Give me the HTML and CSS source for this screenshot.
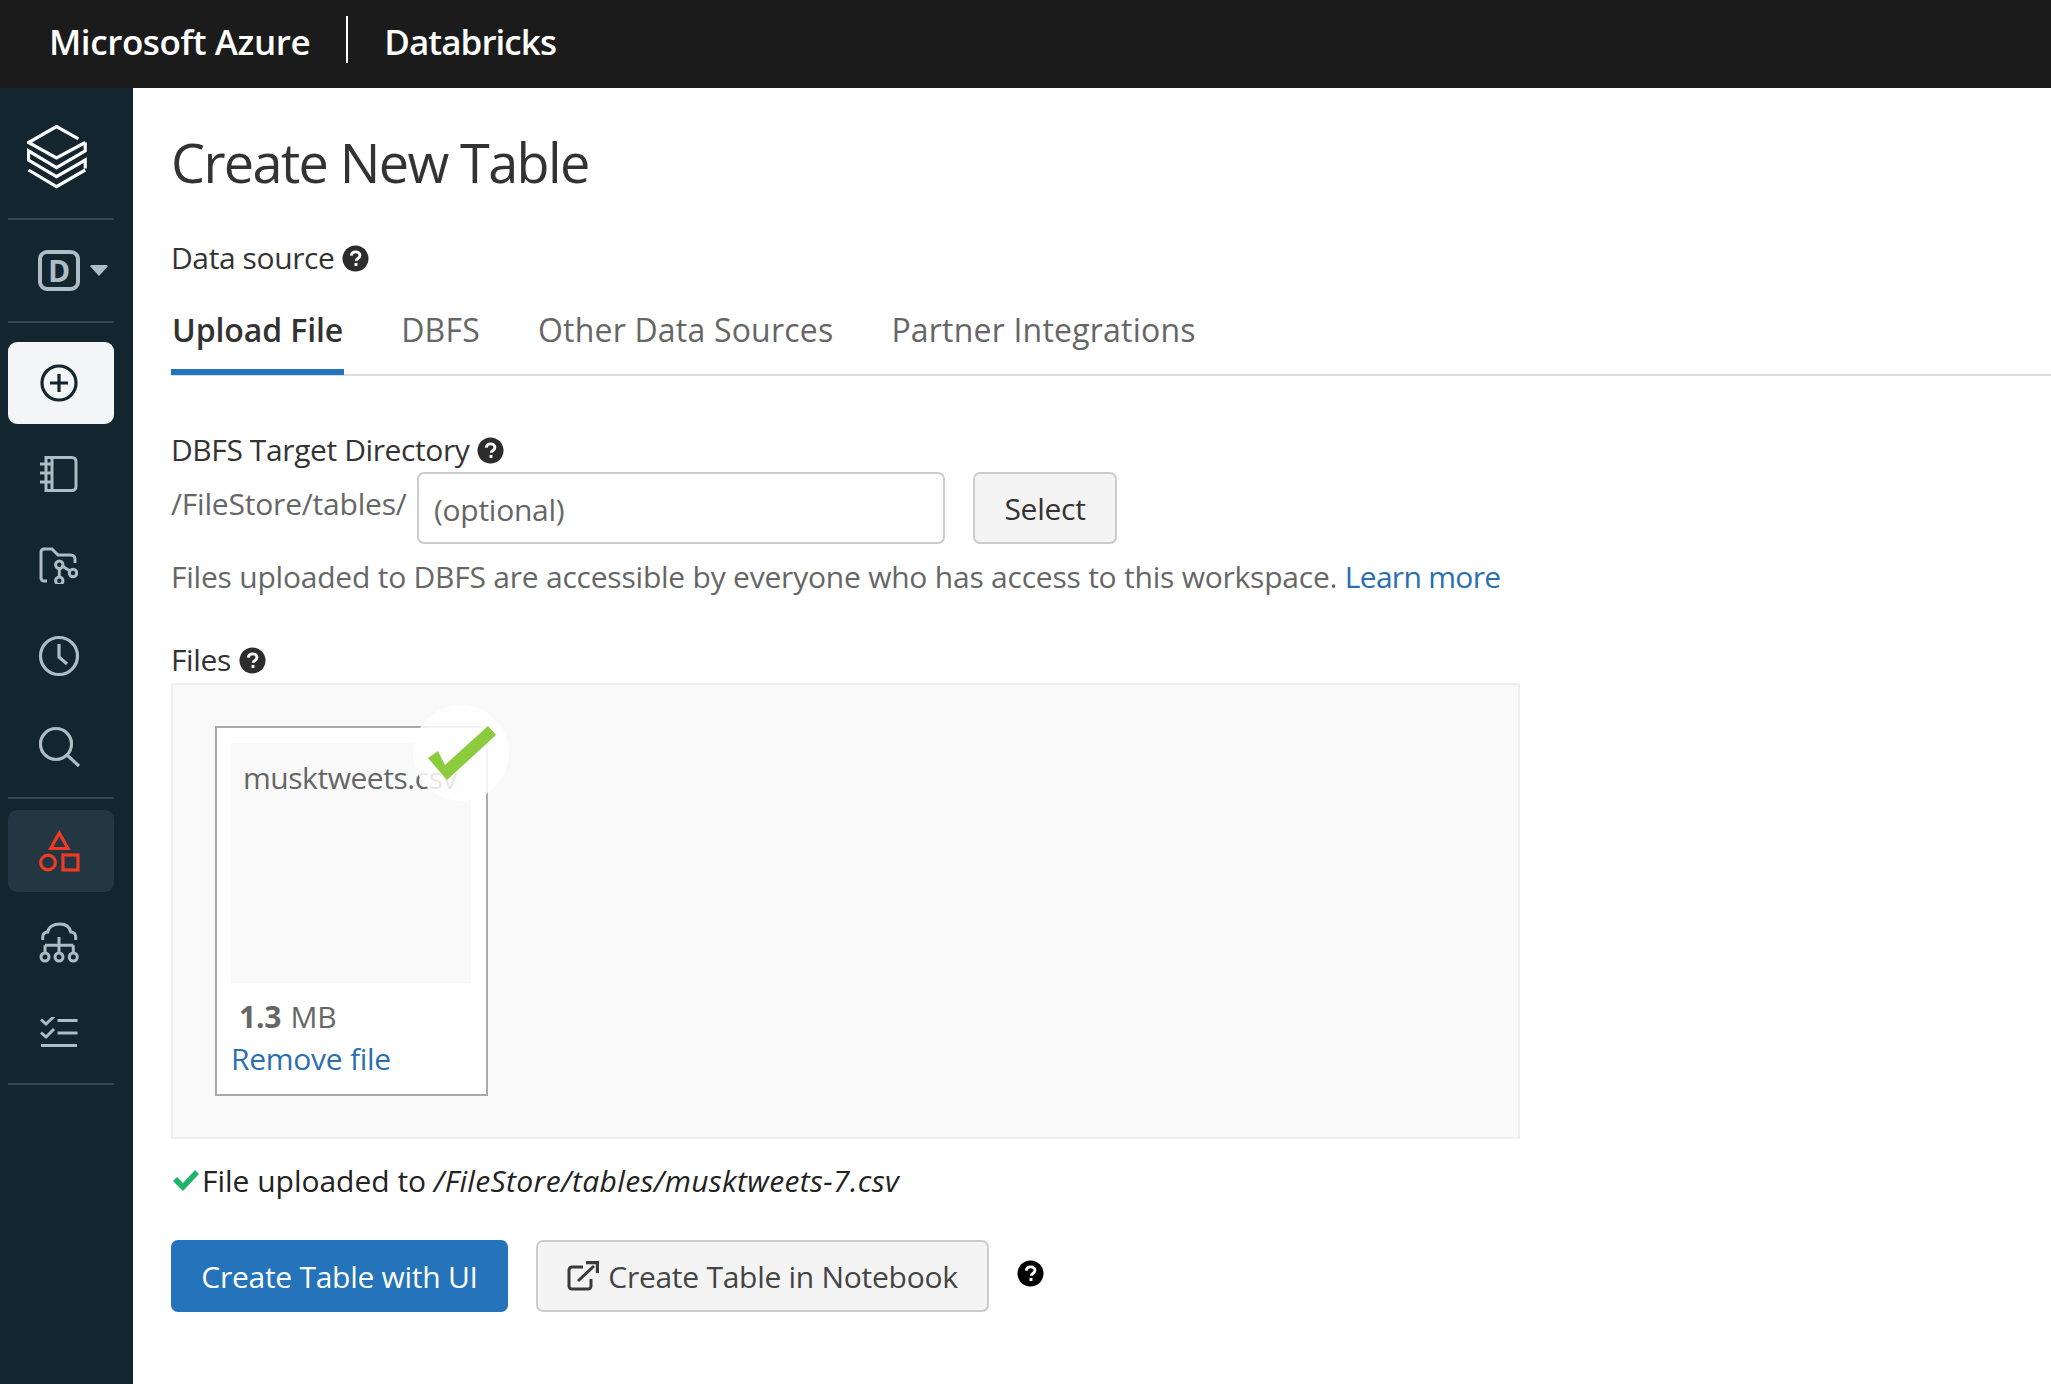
FILE: index.html
```html
<!DOCTYPE html>
<html lang="en">
<head>
<meta charset="utf-8">
<title>Create New Table</title>
<link rel="stylesheet" href="styles.css">
</head>
<body>
<svg class="defs" width="0" height="0" aria-hidden="true">
  <symbol id="q" viewBox="0 0 28 28">
    <circle cx="14" cy="14" r="13.5" fill="currentColor"/>
    <path d="M9.600 11c.3-2.600 2.200-3.900 4.600-3.900 2.600 0 4.400 1.500 4.400 3.600 0 1.700-1 2.500-2.200 3.300-1 .7-1.500 1.200-1.500 2.400" fill="none" stroke="#fff" stroke-width="3"/>
    <rect x="13" y="18.600" width="3" height="3.200" fill="#fff"/>
  </symbol>
</svg>
<header class="topbar">
  <span class="brand">Microsoft Azure</span>
  <span class="brand-div"></span>
  <span class="brand brand-b">Databricks</span>
</header>
<div class="shell">
  <nav class="sidebar">
    <div class="logo">
      <svg width="60" height="64" viewBox="0 0 60 64" fill="none" stroke="#fff" stroke-width="3.200"><path d="M51.500 13.800 29.500 1.500 1.500 17.500 29.500 33 58.200 17.500"/><path d="M58.200 17.500v8.300L29.500 42.700 1.500 25.800V35l28 16.700L58.200 35v8.500"/><path d="M1.500 45l28 16.700L58.200 45"/></svg>
    </div>
    <div class="switcher">
      <span class="workspace">D</span>
      <svg width="20" height="13" viewBox="0 0 18 12"><path d="M2 1h14a1 1 0 0 1 .8 1.600L9 11 1.200 2.600A1 1 0 0 1 2 1z" fill="#aebcc4"/></svg>
    </div>
    <div class="group">
      <div class="item item-new">
        <svg width="38" height="38" viewBox="0 0 38 38" fill="none" stroke="#13252e" stroke-width="3.200"><circle cx="19" cy="19" r="17"/><path d="M19 10v18M10 19h18"/></svg>
      </div>
      <div class="item">
        <svg width="38" height="36" viewBox="0 0 38 36" fill="none" stroke="#aebcc4" stroke-width="3"><path d="M6 1.500h26a4 4 0 0 1 4 4v25a4 4 0 0 1-4 4H6z"/><path d="M12 1.500v33M0 8h11M0 17h11M0 26h11"/></svg>
      </div>
      <div class="item">
        <svg width="39" height="38" viewBox="0 -1 39 38" fill="none" stroke="#aebcc4" stroke-width="3"><path d="M8 34H5a3 3 0 0 1-3-3V5a3 3 0 0 1 3-3h8l6 6h13a4 4 0 0 1 4 4v4"/><circle cx="20.300" cy="17.700" r="3.700"/><circle cx="34" cy="26" r="3.700"/><circle cx="20.300" cy="33.700" r="3.700"/><path d="M20.300 21.500v8.500M24 19.500l7 4.500"/></svg>
      </div>
      <div class="item">
        <svg width="42" height="42" viewBox="0 0 42 42" fill="none" stroke="#aebcc4" stroke-width="3.200"><circle cx="21" cy="21" r="18.500"/><path d="M21 9v13l8 7"/></svg>
      </div>
      <div class="item">
        <svg width="42" height="42" viewBox="0 0 42 42" fill="none" stroke="#aebcc4" stroke-width="3.200"><circle cx="18" cy="18" r="15.500"/><path d="m29 29 12 11"/></svg>
      </div>
    </div>
    <div class="group group-b">
      <div class="item item-active">
        <svg width="42" height="44" viewBox="0 0 42 44" fill="none" stroke="#f03a24" stroke-width="3.200"><path d="m21.300 4 8.600 15.500H12.700z"/><circle cx="10" cy="33.500" r="7.400"/><rect x="25" y="26" width="15" height="15"/></svg>
      </div>
      <div class="item">
        <svg width="42" height="42" viewBox="0 0 42 42" fill="none" stroke="#aebcc4" stroke-width="3"><path d="M4.700 19v-3c0-3 2-5 5-5 1-5 6-8 12-8s10 3 11 8c3 0 5 2 5 5v3"/><path d="M21 16v16M7 24.300h28.300M7 24.300V32M35.300 24.300V32"/><circle cx="7" cy="36" r="4"/><circle cx="21" cy="36" r="4"/><circle cx="35.300" cy="36" r="4"/></svg>
      </div>
      <div class="item">
        <svg width="38" height="33" viewBox="0 2 38 33" fill="none" stroke="#aebcc4" stroke-width="3"><path d="m1 4.500 5 4.500 8-7.500M1 17.500 6 22l8-8"/><path d="M17.500 5.500h20M17.500 18h20M1 30.500h36"/></svg>
      </div>
    </div>
  </nav>
  <main class="content">
    <h1 class="title">Create New Table</h1>
    <div class="label">Data source <svg class="q"><use href="#q"/></svg></div>
    <div class="tabs">
      <span class="tab tab-on">Upload File</span>
      <span class="tab">DBFS</span>
      <span class="tab">Other Data Sources</span>
      <span class="tab">Partner Integrations</span>
    </div>
    <div class="label label-dir">DBFS Target Directory <svg class="q"><use href="#q"/></svg></div>
    <div class="dir-row">
      <span class="path">/FileStore/tables/</span>
      <span class="input">(optional)</span>
      <span class="btn btn-select">Select</span>
    </div>
    <p class="help">Files uploaded to DBFS are accessible by everyone who has access to this workspace. <a class="link">Learn more</a></p>
    <div class="label label-files">Files <svg class="q"><use href="#q"/></svg></div>
    <div class="drop">
      <div class="card">
        <div class="thumb"><span class="fname">musktweets.csv</span></div>
        <div class="size"><b>1.3</b> MB</div>
        <a class="link remove">Remove file</a>
        <div class="ok">
          <svg width="96" height="96" viewBox="0 0 96 96"><path d="M15 53 25 46 32 60 75 21 83 30 34 75z" fill="#8ccb3e"/></svg>
        </div>
      </div>
    </div>
    <div class="status">
      <svg width="28" height="24" viewBox="0 0 28 24"><path d="M1 13l4-4 6 6L23 2l4 4-16 17z" fill="#1fb36b"/></svg>
      <span>File uploaded to <i>/FileStore/tables/musktweets-7.csv</i></span>
    </div>
    <div class="actions">
      <span class="btn btn-primary">Create Table with UI</span>
      <span class="btn btn-note">
        <svg width="32" height="30" viewBox="0 0 32 30" fill="none" stroke="#3a3a3a" stroke-width="3"><path d="M24 18v7a3 3 0 0 1-3 3H5a3 3 0 0 1-3-3V9a3 3 0 0 1 3-3h11"/><path d="M11 20 27 5"/><path d="M19 1.500h11.500V12" stroke-width="3.400"/></svg>
        Create Table in Notebook
      </span>
      <svg class="q q-black"><use href="#q"/></svg>
    </div>
  </main>
</div>
</body>
</html>
```
FILE: styles.css
```css
* { box-sizing: border-box; }
html, body { margin: 0; padding: 0; }
body {
  width: 2051px;
  height: 1384px;
  overflow: hidden;
  background: #fff;
  font-family: "Open Sans", "Noto Sans", sans-serif;
  font-size: 30px;
  letter-spacing: -0.27px;
  color: #333;
  display: flex;
  flex-direction: column;
}
.defs { position: absolute; }
.topbar {
  height: 88px;
  flex: none;
  background: #1b1b1b;
  display: flex;
  align-items: center;
  padding: 0 0 5px 49px;
  color: #fff;
}
.brand { font-size: 35px; font-weight: 600; letter-spacing: -0.4px; }
.brand-b { letter-spacing: -0.95px; }
.brand-div { width: 2px; height: 47px; background: #fff; margin: 0 36px 5px 36px; }
.shell { flex: 1; display: flex; min-height: 0; }
.sidebar {
  width: 133px;
  flex: none;
  background: #13252e;
  display: flex;
  flex-direction: column;
  padding: 0 19px 0 8px;
}
.logo {
  height: 132px;
  display: flex;
  align-items: center;
  justify-content: center;
  padding: 7px 9px 0 0;
  border-bottom: 2px solid #354650;
}
.switcher {
  height: 103px;
  display: flex;
  align-items: center;
  justify-content: flex-end;
  gap: 9px;
  padding-right: 5px;
  border-bottom: 2px solid #354650;
}
.workspace {
  width: 42px;
  height: 41px;
  border: 4px solid #aebcc4;
  border-radius: 9px;
  display: flex;
  align-items: center;
  justify-content: center;
  font-size: 30px;
  font-weight: 700;
  letter-spacing: 0;
  color: #aebcc4;
}
.group {
  display: flex;
  flex-direction: column;
  gap: 9px;
  padding: 19px 0 9px;
  border-bottom: 2px solid #354650;
}
.group-b { padding: 11px 0 9px; }
.item {
  height: 82px;
  display: flex;
  align-items: center;
  justify-content: center;
  padding-right: 5px;
  border-radius: 9px;
}
.item-new { background: #f4f5f6; }
.item-active { background: #233742; }
.content { flex: 1; padding: 0 0 0 38px; min-width: 0; }
.title {
  margin: 0;
  padding-top: 38px;
  height: 150px;
  font-size: 54px;
  line-height: 72px;
  font-weight: 400;
  letter-spacing: -1.62px;
  color: #333;
}
.label { display: flex; align-items: center; gap: 8px; line-height: 40px; height: 40px; color: #333; letter-spacing: -0.4px; }
.q { width: 27px; height: 27px; color: #2c2c2c; flex: none; }
.tabs {
  display: flex;
  gap: 56px;
  height: 98px;
  border-bottom: 2px solid #ddd;
  padding-top: 30px;
}
.tab { height: 66px; padding: 0 1px; line-height: 44px; font-weight: 500; color: #666; font-size: 32px; letter-spacing: 0.2px; }
.tab-on { color: #333; font-weight: 600; letter-spacing: -0.1px; border-bottom: 6px solid #2574bb; height: 67px; }
.label-dir { margin-top: 54px; }
.dir-row { display: flex; align-items: flex-start; margin-top: 2px; }
.path { width: 246px; line-height: 40px; height: 72px; padding-top: 12px; color: #666; white-space: nowrap; letter-spacing: -0.2px; }
.input {
  width: 528px;
  height: 72px;
  border: 2px solid #ccc;
  border-radius: 7px;
  padding: 0 15px;
  line-height: 72px;
  color: #666;
}
.btn {
  display: inline-flex;
  align-items: center;
  justify-content: center;
  border-radius: 7px;
  height: 72px;
}
.btn-select {
  width: 144px;
  margin-left: 28px;
  background: #f4f4f4;
  border: 2px solid #ccc;
  color: #333;
}
.help { margin: 13px 0 0; line-height: 40px; color: #666; letter-spacing: -0.22px; }
.link { color: #2a6fb0; }
.help .link { letter-spacing: -0.7px; }
.label-files { margin-top: 43px; }
.drop {
  width: 1349px;
  height: 456px;
  margin-top: 3px;
  background: #f9f9f9;
  border: 2px solid #eee;
  padding: 41px 0 0 42px;
}
.card {
  position: relative;
  width: 273px;
  height: 370px;
  background: #fff;
  border: 2px solid #a9a9a9;
  padding: 15px 14px;
}
.thumb { width: 240px; height: 240px; background: #f9f9f9; padding: 19px 12px; line-height: 32px; white-space: nowrap; color: #666; }
.fname { display: block; letter-spacing: -0.45px; }
.size { margin: 14px 0 0 8px; line-height: 40px; color: #666; word-spacing: 2px; }
.size b { font-weight: 700; }
.remove { display: block; line-height: 40px; margin-top: 2px; }
.ok {
  position: absolute;
  left: 196px;
  top: -23px;
  width: 96px;
  height: 96px;
  border-radius: 50%;
  background: rgba(255,255,255,0.85);
}
.ok svg { display: block; }
.status { display: flex; align-items: center; gap: 2px; margin: 21px 0 0 1px; height: 40px; color: #222; letter-spacing: -0.02px; }
.status i { font-style: italic; color: #222; letter-spacing: 0.36px; }
.actions { display: flex; align-items: flex-start; margin-top: 40px; }
.btn-primary { width: 337px; background: #2574bb; color: #fff; }
.btn-note {
  width: 453px;
  margin-left: 28px;
  background: #f4f4f4;
  border: 2px solid #ccc;
  color: #444;
  gap: 9px;
}
.q-black { color: #000; margin: 20px 0 0 28px; }
```
